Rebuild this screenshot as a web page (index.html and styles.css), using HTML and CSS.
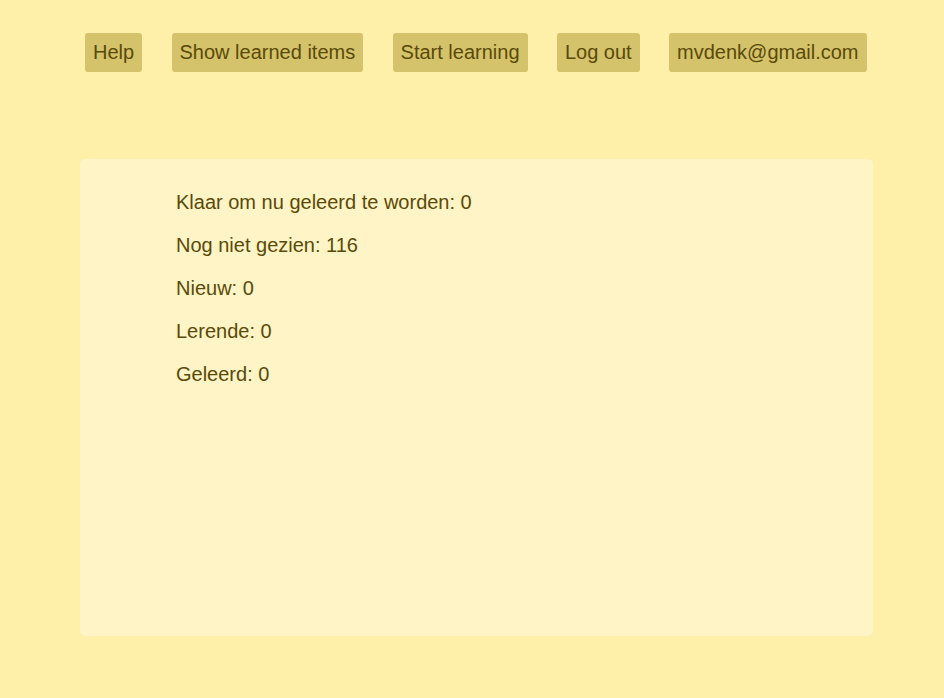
FILE: index.html
```html
<!DOCTYPE html>
<html>
<head>
<meta charset="utf-8">
<link rel="stylesheet" href="styles.css">
</head>
<body>
<nav class="nav">
  <a class="btn">Help</a>
  <a class="btn">Show learned items</a>
  <a class="btn">Start learning</a>
  <a class="btn">Log out</a>
  <a class="btn">mvdenk@gmail.com</a>
</nav>
<main class="card">
  <p class="stat">Klaar om nu geleerd te worden: 0</p>
  <p class="stat">Nog niet gezien: 116</p>
  <p class="stat">Nieuw: 0</p>
  <p class="stat">Lerende: 0</p>
  <p class="stat">Geleerd: 0</p>
</main>
</body>
</html>
```
FILE: styles.css
```css
html, body {
  margin: 0;
  padding: 0;
}
body {
  background: #feefa9;
  font-family: "Liberation Sans", Arial, sans-serif;
  font-size: 20px;
  line-height: 23px;
  color: #5a4a08;
  height: 698px;
  overflow: hidden;
}
.nav {
  display: flex;
  gap: 29.4px;
  padding: 33px 0 0 85px;
}
.btn {
  display: block;
  background: #d4c36b;
  border-radius: 3px;
  padding: 8px 8px;
  white-space: nowrap;
}
.card {
  margin: 87px 0 0 80px;
  width: 793px;
  height: 477px;
  box-sizing: border-box;
  background: #fef4c5;
  border-radius: 5px;
  padding: 12px 20px 0 96px;
  overflow: hidden;
}
.stat {
  margin: 20px 0;
}
```
